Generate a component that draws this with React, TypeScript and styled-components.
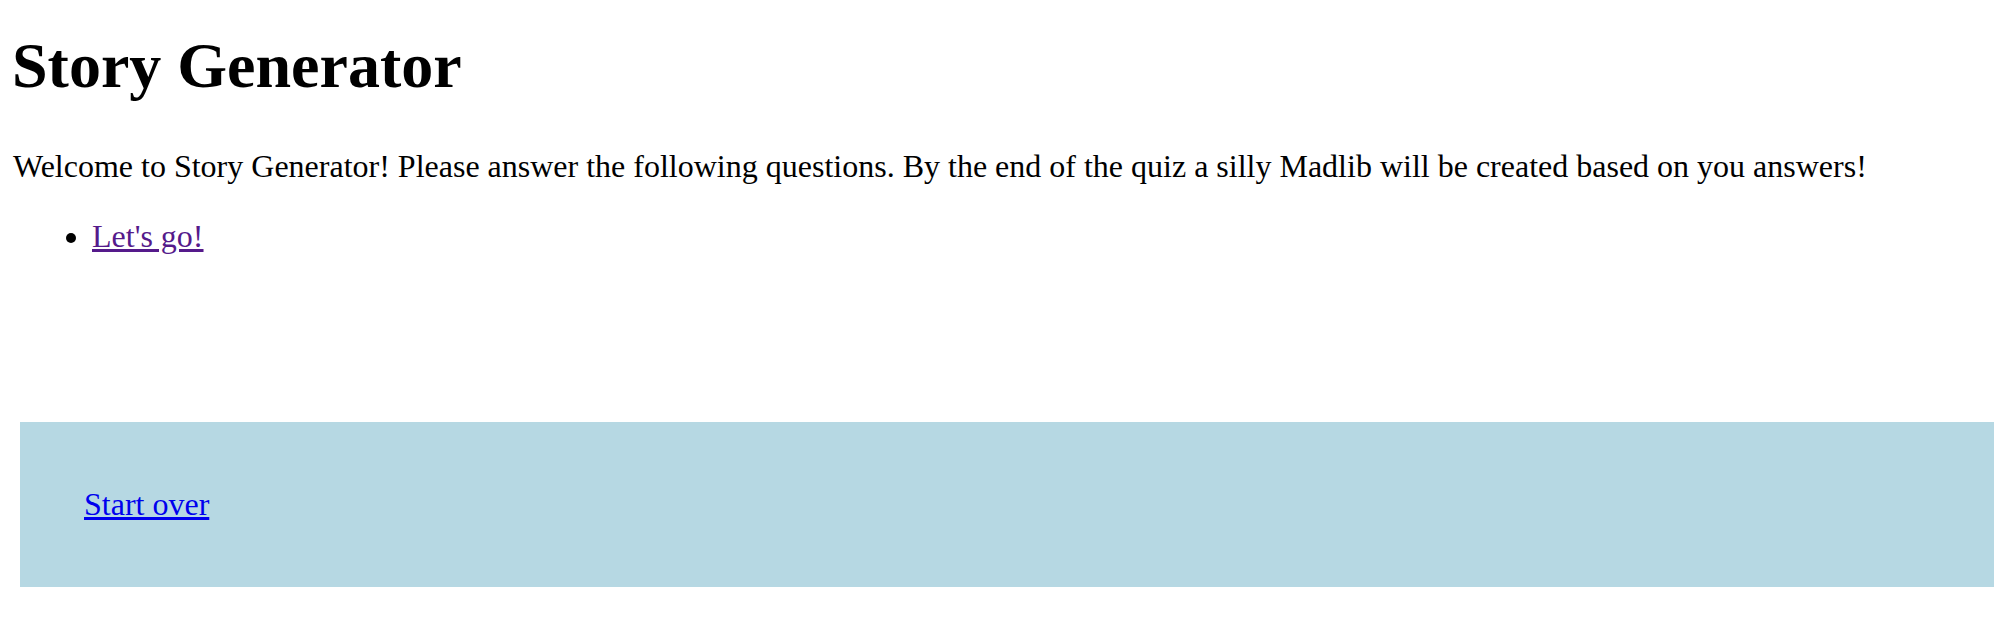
import React from "react";
import styled, { createGlobalStyle } from "styled-components";

const GlobalStyle = createGlobalStyle`
  html, body {
    margin: 0;
    padding: 0;
    background: #ffffff;
  }
  body {
    font-family: "Liberation Serif", "Times New Roman", serif;
    color: #000000;
  }
`;

const Page = styled.div`
  display: flex;
  flex-direction: column;
  padding-left: 13px;
`;

const Title = styled.h1`
  margin: 30px 0 0 -1px;
  font-size: 64px;
  line-height: 71px;
  font-weight: 700;
`;

const Intro = styled.p`
  margin: 47px 0 0 0;
  font-size: 32px;
  line-height: 37px;
`;

const Menu = styled.ul`
  margin: 33px 0 0 0;
  padding-left: 79px;
  font-size: 32px;
  line-height: 37px;
  list-style: disc;
`;

const Link = styled.a<{ $visited?: boolean }>`
  color: ${(p) => (p.$visited ? "#551a8b" : "#0000ee")};
  text-decoration: underline;
`;

const Footer = styled.footer`
  margin: 167px 0 0 7px;
  padding: 64px;
  background: #b6d8e3;
  font-size: 32px;
  line-height: 37px;
`;

export default function App() {
  return (
    <>
      <GlobalStyle />
      <Page>
        <Title>Story Generator</Title>
        <Intro>
          Welcome to Story Generator! Please answer the following questions. By the end of the
          quiz a silly Madlib will be created based on you answers!
        </Intro>
        <Menu>
          <li>
            <Link href="#" $visited>
              Let's go!
            </Link>
          </li>
        </Menu>
        <Footer>
          <Link href="#">Start over</Link>
        </Footer>
      </Page>
    </>
  );
}
